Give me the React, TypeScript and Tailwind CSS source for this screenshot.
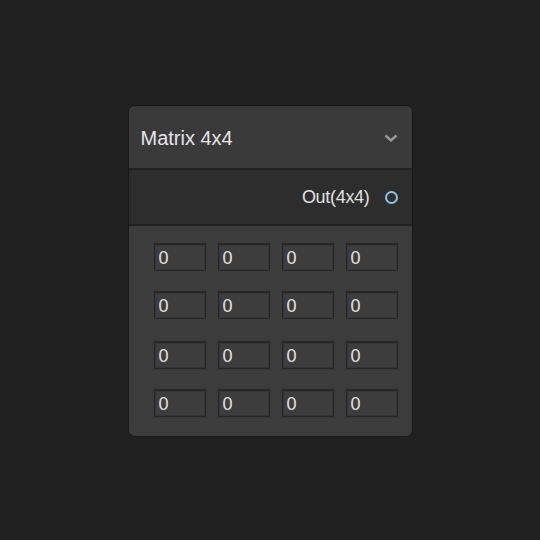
import React from "react";

const rows = [0, 1, 2, 3];
const cols = [0, 1, 2, 3];

function Cell() {
  return (
    <div className="w-[52px] h-[28px] border border-[#262626] border-t-2 bg-[#3d3d3d] shadow-[inset_0_0_0_1px_#353535] flex items-center pl-[4px] text-[18px] leading-none text-[#e2e2e2]">
      0
    </div>
  );
}

export default function App() {
  return (
    <div
      className="w-[540px] h-[540px] bg-[#212121] flex items-center justify-center"
      style={{ fontFamily: '"Liberation Sans", Arial, sans-serif' }}
    >
      <div className="w-[285px] h-[332px] mt-[2px] rounded-[7px] border border-[#191919] bg-[#3c3c3c] overflow-hidden flex flex-col">
        <div className="h-[64px] shrink-0 bg-[#3a3a3a] flex items-center justify-between pl-[12px] pr-[14px] border-b-2 border-[#222222]">
          <span className="text-[20px] text-[#e4e4e4] pt-[1px]">Matrix 4x4</span>
          <svg width="14" height="9" viewBox="0 0 14 9" className="mt-[2px]">
            <path d="M1.5 1.5 L7 6.5 L12.5 1.5" fill="none" stroke="#9a9a9a" strokeWidth="2.4" />
          </svg>
        </div>
        <div className="h-[56px] shrink-0 bg-[#2d2d2d] flex items-center justify-end pr-[14px] border-b-2 border-[#222222]">
          <span className="text-[18px] text-[#e0e0e0] tracking-[-0.3px] mr-[15px]">Out(4x4)</span>
          <span className="w-[13px] h-[13px] rounded-full border-2 border-[#8cc4e6]" />
        </div>
        <div className="flex-1 flex flex-col pl-[25px] pt-[17px]">
          {rows.map((r) => (
            <div key={r} className={`flex gap-[12px] ${r === 1 ? "mt-[20px]" : r === 2 ? "mt-[22px]" : r === 3 ? "mt-[20px]" : ""}`}>
              {cols.map((c) => (
                <Cell key={c} />
              ))}
            </div>
          ))}
        </div>
      </div>
    </div>
  );
}
